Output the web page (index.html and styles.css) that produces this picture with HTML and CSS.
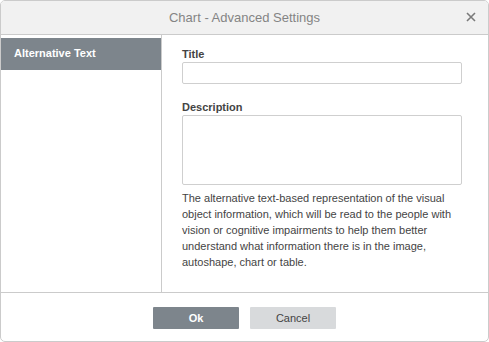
FILE: index.html
```html
<!DOCTYPE html>
<html lang="en">
<head>
  <meta charset="UTF-8">
  <title>Chart - Advanced Settings</title>
  <link rel="stylesheet" href="styles.css">
</head>
<body>

<div class="dialog">
  <div class="header">
    <span class="title">Chart - Advanced Settings</span>
    <span class="close">
      <svg width="10" height="10" viewBox="0 0 10 10"><path d="M1 1L9 9M9 1L1 9" stroke="#7a7a7a" stroke-width="1.6"/></svg>
    </span>
  </div>

  <div class="body">
    <div class="side">
      <div class="tab active">Alternative Text</div>
    </div>
    <div class="content">
      <label class="label">Title</label>
      <input type="text" class="field">
      <label class="label desc">Description</label>
      <textarea class="area"></textarea>
      <p class="help">The alternative text-based representation of the visual object information, which will be read to the people with vision or cognitive impairments to help them better understand what information there is in the image, autoshape, chart or table.</p>
    </div>
  </div>

  <div class="footer">
    <button class="btn primary">Ok</button>
    <button class="btn">Cancel</button>
  </div>
</div>

</body>
</html>
```

FILE: styles.css
```css
body {
  margin: 0;
  font-family: "Liberation Sans", Arial, sans-serif;
  font-size: 11px;
  color: #444;
  background: #fff;
}
.dialog {
  width: 489px;
  height: 342px;
  box-sizing: border-box;
  border: 1px solid #cbcbcb;
  border-radius: 5px;
  display: flex;
  flex-direction: column;
  overflow: hidden;
}
.header {
  height: 33px;
  flex: none;
  background: #f1f1f1;
  border-bottom: 1px solid #cbcbcb;
  display: flex;
  align-items: center;
  justify-content: center;
  position: relative;
}
.title {
  font-size: 13px;
  color: #848484;
}
.close {
  position: absolute;
  right: 12px;
  top: 11px;
  width: 10px;
  height: 10px;
  display: flex;
}
.body {
  flex: 1;
  display: flex;
  border-bottom: 1px solid #cbcbcb;
}
.side {
  width: 160px;
  flex: none;
  border-right: 1px solid #cbcbcb;
  padding-top: 3px;
}
.tab {
  height: 32px;
  line-height: 30px;
  padding-left: 13px;
  font-weight: bold;
  color: #fff;
}
.tab.active {
  background: #7d858c;
}
.content {
  flex: 1;
  padding: 12px 26px 0 20px;
  display: flex;
  flex-direction: column;
}
.label {
  font-weight: bold;
  line-height: 14px;
  margin-bottom: 1px;
}
.label.desc {
  margin-top: 16px;
  margin-bottom: 1px;
}
.field, .area {
  box-sizing: border-box;
  width: 280px;
  border: 1px solid #cfcfcf;
  border-radius: 2px;
  margin: 0;
  font-family: inherit;
  font-size: 11px;
  resize: none;
  outline: none;
}
.field {
  height: 22px;
}
.area {
  height: 70px;
}
.help {
  margin: 5px 0 0;
  line-height: 16px;
  width: 290px;
}
.footer {
  height: 48px;
  flex: none;
  display: flex;
  justify-content: center;
  gap: 11px;
  padding-top: 14px;
  box-sizing: border-box;
}
.btn {
  width: 86px;
  height: 22px;
  border: none;
  border-radius: 1px;
  background: #d8dadc;
  color: #444;
  font-family: inherit;
  font-size: 11px;
  padding: 0;
}
.btn.primary {
  background: #7d858c;
  color: #fff;
  font-weight: bold;
}
```
